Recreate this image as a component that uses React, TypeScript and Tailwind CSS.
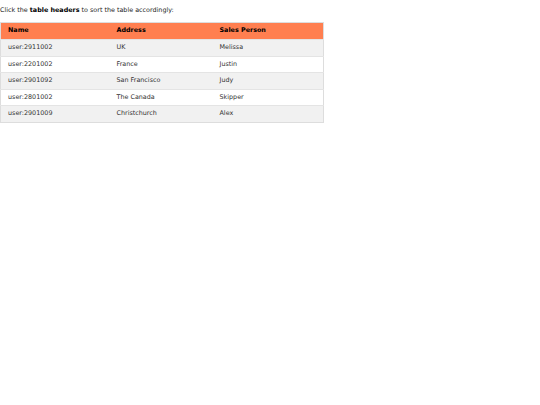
const ROWS = [
  { name: 'user:2911002', address: 'UK', person: 'Melissa' },
  { name: 'user:2201002', address: 'France', person: 'Justin' },
  { name: 'user:2901092', address: 'San Francisco', person: 'Judy' },
  { name: 'user:2801002', address: 'The Canada', person: 'Skipper' },
  { name: 'user:2901009', address: 'Christchurch', person: 'Alex' },
];

export default function App() {
  return (
    <div className="min-h-[405px] bg-white text-[6.4px] text-[#333] font-['DejaVu_Sans',Verdana,sans-serif]">
      <p className="pt-[6px] pb-[7px] leading-[9px] text-[#222]">
        Click the <b className="text-black">table headers</b> to sort the table accordingly:
      </p>
      <table className="w-[324px] border-collapse border border-[#ddd] table-fixed">
        <thead>
          <tr className="bg-[#ff7f50] text-black">
            <th className="w-[109px] h-[17px] px-[7px] text-left font-bold">Name</th>
            <th className="w-[103px] px-[7px] text-left font-bold">Address</th>
            <th className="px-[7px] text-left font-bold">Sales Person</th>
          </tr>
        </thead>
        <tbody>
          {ROWS.map((r, i) => (
            <tr key={r.name} className={i % 2 === 0 ? 'bg-[#f1f1f1]' : 'bg-white'}>
              <td className="h-[16.6px] px-[7px] border-t border-[#e4e4e4]">{r.name}</td>
              <td className="px-[7px] border-t border-[#e4e4e4]">{r.address}</td>
              <td className="px-[7px] border-t border-[#e4e4e4]">{r.person}</td>
            </tr>
          ))}
        </tbody>
      </table>
    </div>
  );
}
